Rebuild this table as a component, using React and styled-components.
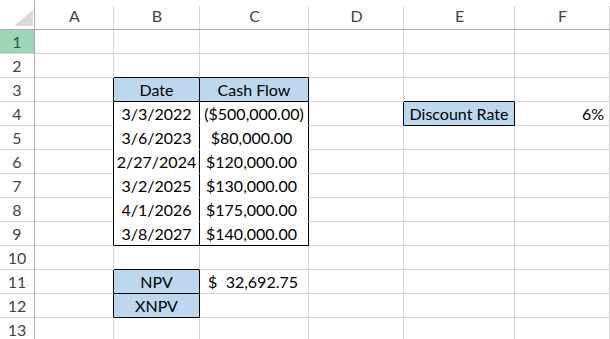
import React from "react";
import styled, { createGlobalStyle } from "styled-components";

const GlobalStyle = createGlobalStyle`
  html, body { margin: 0; padding: 0; background: #fff; }
  body { font-family: Lato, "Liberation Sans", sans-serif; }
`;

const COLS = ["A", "B", "C", "D", "E", "F"];
const COL_WIDTHS = [79, 86, 109, 95, 111, 95];
const ROWS = 13;
const GRID = "#d4d4d4";
const HEAD_LINE = "#ababab";
const BLUE = "#bdd7ee";

const Sheet = styled.div`
  display: grid;
  grid-template-columns: 35px ${COL_WIDTHS.map((w) => `${w}px`).join(" ")};
  grid-template-rows: 30px repeat(${ROWS}, 24px);
  width: 610px;
  height: 339px;
  overflow: hidden;
  font-family: Lato, "Liberation Sans", sans-serif;
  font-size: 16px;
  color: #000;
`;

const Corner = styled.div`
  box-sizing: border-box;
  border-right: 1px solid ${HEAD_LINE};
  border-bottom: 1px solid ${HEAD_LINE};
  display: flex;
  align-items: flex-end;
  justify-content: flex-end;
  padding: 0 0 2px 0;
  background: #fff;
`;

const ColHead = styled.div`
  box-sizing: border-box;
  border-bottom: 1px solid ${HEAD_LINE};
  background: linear-gradient(${GRID}, ${GRID}) right bottom / 1px calc(100% - 6px) no-repeat, #fff;
  display: flex;
  align-items: flex-end;
  justify-content: center;
  padding-bottom: 3px;
  color: #444;
  line-height: 20px;
`;

const RowHead = styled.div`
  box-sizing: border-box;
  border-right: 1px solid ${(p) => (p.$active ? "#9aa69f" : HEAD_LINE)};
  border-bottom: 1px solid ${GRID};
  background: ${(p) => (p.$active ? "#9fd5b7" : "#fff")};
  color: ${(p) => (p.$active ? "#1d5a36" : "#444")};
  display: flex;
  align-items: center;
  justify-content: center;
  padding-top: 1px;
  line-height: 22px;
`;

const Cell = styled.div`
  box-sizing: border-box;
  border-right: 1px solid ${(p) => p.$br};
  border-bottom: 1px solid ${(p) => p.$bb};
  background: ${(p) => p.$fill || "#fff"};
  display: flex;
  align-items: center;
  justify-content: ${(p) => p.$align || "flex-start"};
  padding: 1px ${(p) => p.$padR ?? 3}px 0 ${(p) => p.$padL ?? 3}px;
  white-space: nowrap;
  line-height: 22px;
`;

const Accounting = styled.div`
  display: flex;
  justify-content: space-between;
  width: 100%;
`;

const cells = {
  B3: { text: "Date", fill: BLUE, align: "center" },
  C3: { text: "Cash Flow", fill: BLUE, align: "center" },
  B4: { text: "3/3/2022", align: "center" },
  C4: { text: "($500,000.00)", align: "center" },
  B5: { text: "3/6/2023", align: "center" },
  C5: { text: "$80,000.00", align: "center", padR: 8 },
  B6: { text: "2/27/2024", align: "center" },
  C6: { text: "$120,000.00", align: "center", padR: 8 },
  B7: { text: "3/2/2025", align: "center" },
  C7: { text: "$130,000.00", align: "center", padR: 8 },
  B8: { text: "4/1/2026", align: "center" },
  C8: { text: "$175,000.00", align: "center", padR: 8 },
  B9: { text: "3/8/2027", align: "center" },
  C9: { text: "$140,000.00", align: "center", padR: 8 },
  E4: { text: "Discount Rate", fill: BLUE, align: "center" },
  F4: { text: "6%", align: "flex-end", padR: 5 },
  B11: { text: "NPV", fill: BLUE, align: "center" },
  B12: { text: "XNPV", fill: BLUE, align: "center" },
  C11: { acct: ["$", "32,692.75"], padL: 8, padR: 10 },
};

const boxed = new Set(["B3", "C3", "E4", "B11", "B12"]);
for (let r = 4; r <= 9; r++) {
  boxed.add(`B${r}`);
  boxed.add(`C${r}`);
}
const hiddenBottom = new Set();
for (let r = 4; r <= 8; r++) {
  hiddenBottom.add(`B${r}`);
  hiddenBottom.add(`C${r}`);
}

const key = (ci, r) => `${COLS[ci]}${r}`;

function rightColor(ci, r) {
  if (boxed.has(key(ci, r)) || (ci + 1 < COLS.length && boxed.has(key(ci + 1, r)))) return "#000";
  return GRID;
}
function bottomColor(ci, r) {
  const k = key(ci, r);
  if (hiddenBottom.has(k)) return "#fff";
  if (boxed.has(k) || boxed.has(key(ci, r + 1))) return "#000";
  return GRID;
}

const CornerMark = () => (
  <svg width="20" height="17" viewBox="0 0 20 17">
    <polygon points="19,0 19,16 0,16" fill="#dadada" />
  </svg>
);

export default function App() {
  const items = [];
  items.push(
    <Corner key="corner">
      <CornerMark />
    </Corner>
  );
  COLS.forEach((c) => items.push(<ColHead key={`h${c}`}>{c}</ColHead>));
  for (let r = 1; r <= ROWS; r++) {
    items.push(
      <RowHead key={`r${r}`} $active={r === 1}>
        {r}
      </RowHead>
    );
    COLS.forEach((c, ci) => {
      const k = `${c}${r}`;
      const d = cells[k] || {};
      items.push(
        <Cell
          key={k}
          $br={rightColor(ci, r)}
          $bb={bottomColor(ci, r)}
          $fill={d.fill}
          $align={d.align}
          $padL={d.padL}
          $padR={d.padR}
        >
          {d.acct ? (
            <Accounting>
              <span>{d.acct[0]}</span>
              <span>{d.acct[1]}</span>
            </Accounting>
          ) : (
            d.text
          )}
        </Cell>
      );
    });
  }
  return (
    <>
      <GlobalStyle />
      <Sheet>{items}</Sheet>
    </>
  );
}
